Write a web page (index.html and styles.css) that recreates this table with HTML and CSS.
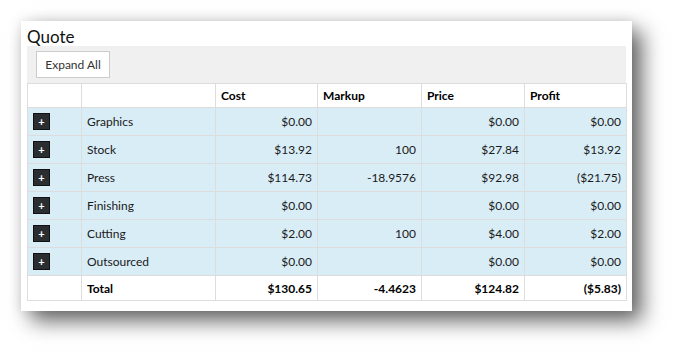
FILE: index.html
```html
<!DOCTYPE html>
<html lang="en">
<head>
  <meta charset="UTF-8">
  <title>Quote</title>
  <link rel="stylesheet" href="styles.css">
</head>
<body>

  <div class="card">
    <h2 class="title">Quote</h2>

    <!-- Toolbar -->
    <div class="toolbar">
      <button class="btn">Expand All</button>
    </div>

    <!-- Quote table -->
    <table class="quote">
      <colgroup>
        <col class="c-toggle">
        <col class="c-name">
        <col class="c-cost">
        <col class="c-markup">
        <col class="c-price">
        <col class="c-profit">
      </colgroup>
      <thead>
        <tr>
          <th></th>
          <th></th>
          <th>Cost</th>
          <th>Markup</th>
          <th>Price</th>
          <th>Profit</th>
        </tr>
      </thead>
      <tbody>
        <tr class="info">
          <td><span class="plus">+</span></td>
          <td>Graphics</td>
          <td class="num">$0.00</td>
          <td class="num"></td>
          <td class="num">$0.00</td>
          <td class="num">$0.00</td>
        </tr>
        <tr class="info">
          <td><span class="plus">+</span></td>
          <td>Stock</td>
          <td class="num">$13.92</td>
          <td class="num">100</td>
          <td class="num">$27.84</td>
          <td class="num">$13.92</td>
        </tr>
        <tr class="info">
          <td><span class="plus">+</span></td>
          <td>Press</td>
          <td class="num">$114.73</td>
          <td class="num">-18.9576</td>
          <td class="num">$92.98</td>
          <td class="num">($21.75)</td>
        </tr>
        <tr class="info">
          <td><span class="plus">+</span></td>
          <td>Finishing</td>
          <td class="num">$0.00</td>
          <td class="num"></td>
          <td class="num">$0.00</td>
          <td class="num">$0.00</td>
        </tr>
        <tr class="info">
          <td><span class="plus">+</span></td>
          <td>Cutting</td>
          <td class="num">$2.00</td>
          <td class="num">100</td>
          <td class="num">$4.00</td>
          <td class="num">$2.00</td>
        </tr>
        <tr class="info">
          <td><span class="plus">+</span></td>
          <td>Outsourced</td>
          <td class="num">$0.00</td>
          <td class="num"></td>
          <td class="num">$0.00</td>
          <td class="num">$0.00</td>
        </tr>
        <tr class="total">
          <td></td>
          <td>Total</td>
          <td class="num">$130.65</td>
          <td class="num">-4.4623</td>
          <td class="num">$124.82</td>
          <td class="num">($5.83)</td>
        </tr>
      </tbody>
    </table>
  </div>

</body>
</html>
```

FILE: styles.css
```css
* {
  margin: 0;
  padding: 0;
  box-sizing: border-box;
  font-family: Lato, "Liberation Sans", sans-serif;
}

html, body {
  height: 100%;
}

body {
  background: #fff;
  color: #1a1a1a;
  padding: 21px 0 0 21px;
}

.card {
  width: 611px;
  background: #fff;
  padding: 0 6px 10px;
  box-shadow: 10px 10px 20px rgba(0, 0, 0, 0.6), 0 0 12px rgba(0, 0, 0, 0.1);
}

.title {
  font-size: 17px;
  font-weight: normal;
  height: 25px;
  line-height: 31px;
  color: #111;
}

.toolbar {
  background: #f0f0f0;
  height: 37px;
  padding: 5px 9px;
}

.btn {
  height: 27px;
  width: 74px;
  background: #fff;
  border: 1px solid #ccc;
  font-size: 12px;
  color: #333;
}

.quote {
  width: 599px;
  border-collapse: collapse;
  table-layout: fixed;
  font-size: 12px;
}

.c-toggle { width: 54px; }
.c-name { width: 134px; }
.c-cost { width: 102px; }
.c-markup { width: 104px; }
.c-price { width: 103px; }
.c-profit { width: 102px; }

.quote th,
.quote td {
  border: 1px solid #ddd;
  padding: 0 5px;
  text-align: left;
  vertical-align: middle;
}

.quote th {
  height: 24px;
  font-weight: bold;
  color: #000;
}

.quote td {
  height: 28px;
}

.quote .num {
  text-align: right;
}

.info td {
  background: #d9edf7;
}

.total td {
  height: 25px;
  font-weight: bold;
  color: #000;
}

.plus {
  display: block;
  width: 17px;
  height: 17px;
  background: #2b2e31;
  border: 1px solid #111;
  color: #fff;
  font-size: 11px;
  font-weight: bold;
  line-height: 15px;
  text-align: center;
}
```
